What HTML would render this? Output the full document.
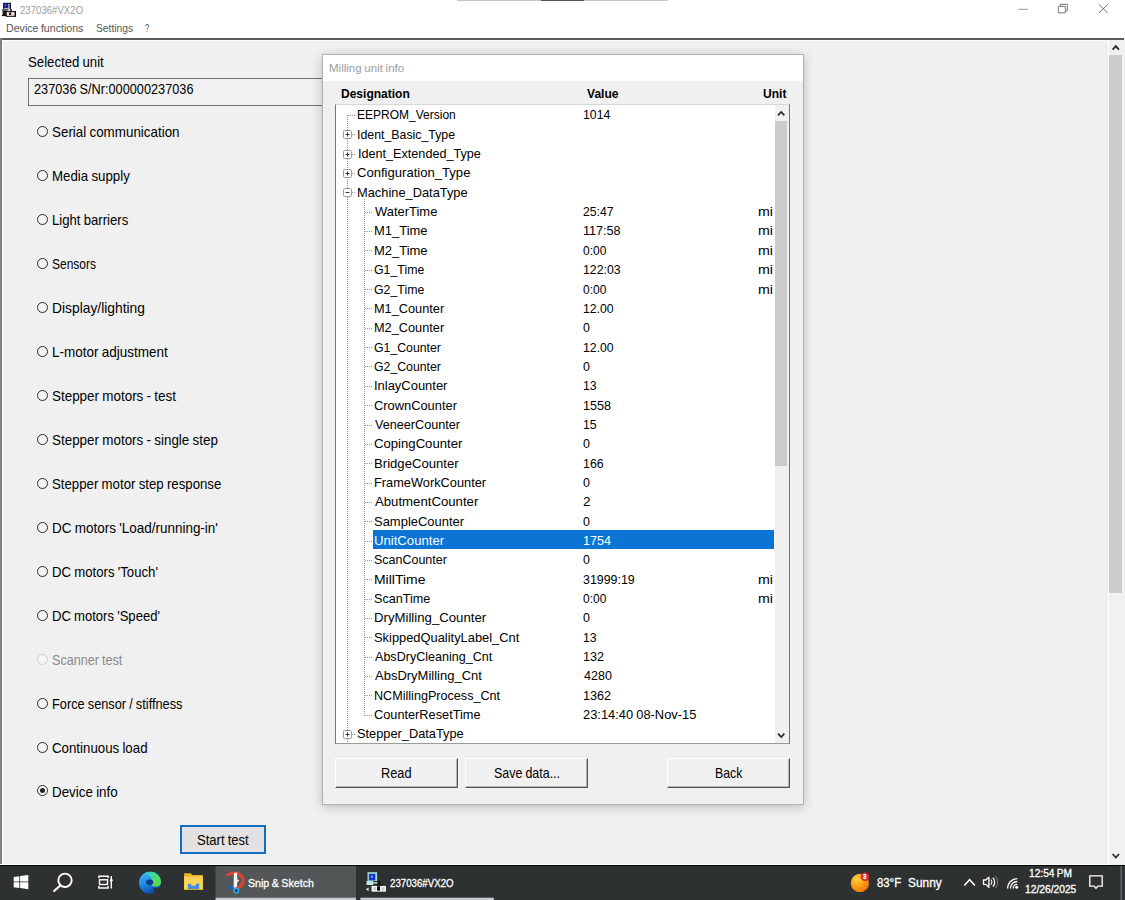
<!DOCTYPE html>
<html><head><meta charset="utf-8"><title>237036#VX2O</title>
<style>
html,body{margin:0;padding:0}
body{width:1125px;height:900px;overflow:hidden;position:relative;background:#fff;font-family:"Liberation Sans",sans-serif;color:#000}
.abs{position:absolute}
.t{position:absolute;white-space:nowrap;word-spacing:-0.5px;line-height:20px;height:20px;transform-origin:0 50%}
#client{left:0;top:38px;width:1125px;height:825.700px;background:#f0f0f0}
.rad{position:absolute;left:37.2px;width:9px;height:9px;border:1px solid #2a2a2a;border-radius:50%;background:#f4f4f4}
.rad.dis{border-color:#ccc}
.rad.on:after{content:"";position:absolute;left:2px;top:2px;width:5px;height:5px;border-radius:50%;background:#222}
#dlg{left:323px;top:54.500px;width:479.500px;height:749px;background:#f0f0f0;box-shadow:0 0 0 1px #b0b0b0,0 2px 10px 1px rgba(0,0,0,.22)}
#dlgt{left:0;top:0;width:479.500px;height:26px;background:#fff}
#tree{left:335px;top:104px;width:453.300px;height:638px;background:#fff;border:1px solid #767676;border-top-color:#d8d8d8;border-bottom-color:#9a9a9a;overflow:hidden}
.btn3{position:absolute;top:758px;height:28.300px;width:120.800px;background:#f0f0f0;border:1px solid #fff;border-right-color:#555;border-bottom-color:#555;box-shadow:inset -1px -1px 0 #b4b4b4}
#task{left:0;top:865px;width:1125px;height:35px;background:#2d3132}
</style></head><body>

<div class="abs" style="left:457px;top:0;width:211px;height:1px;background:#c8c8c8"></div>
<div class="abs" style="left:541px;top:0;width:43px;height:1px;background:#555"></div>
<svg class="abs" style="left:0;top:0" width="18" height="19" viewBox="0 0 18 19">
<rect x="3" y="2.800" width="7.800" height="6.200" fill="#15155e"/>
<rect x="3.800" y="3.600" width="4.600" height="4.200" fill="#1a1a86"/>
<rect x="4.600" y="4.600" width="1.600" height="1.200" fill="#8f8fe0"/>
<rect x="8.300" y="3.800" width="1.300" height="4.800" fill="#c9c9f2"/>
<rect x="3.800" y="7.900" width="5.600" height="0.900" fill="#d4d4f4"/>
<rect x="9.800" y="2.800" width="1" height="6.200" fill="#111"/>
<rect x="2" y="9.300" width="6.500" height="1.200" fill="#16162a"/>
<rect x="2.600" y="10.500" width="3.600" height="4.600" fill="#1a1a1a"/>
<rect x="1.900" y="14.800" width="5" height="1.300" fill="#0a0a0a"/>
<rect x="8.800" y="9.600" width="2.400" height="2" fill="#e9e27e"/>
<rect x="10.300" y="9" width="1.500" height="3" fill="#111"/>
<rect x="6.200" y="11.600" width="9.200" height="4.700" fill="#f3e4ea" stroke="#0a0a0a" stroke-width="1"/>
<rect x="9" y="12.600" width="2.200" height="2.300" fill="#0a0a0a"/>
<rect x="14.600" y="11" width="1.300" height="5.800" fill="#0a0a0a"/>
</svg>
<svg class="abs" style="left:1010px;top:0" width="115" height="20" viewBox="1010 0 115 20"><g stroke="#777" stroke-width="1" fill="none"><path d="M1018.300 9.300h9.500" stroke="#999"/><path d="M1058.300 6.300h7v6.500h-7z M1060.300 6.300v-2h7v6.500h-2"/><path d="M1098.800 4.300l9 8.800M1107.800 4.300l-9 8.800"/></g></svg>
<div id="client" class="abs">
<div class="abs" style="left:0;top:0;width:1123.600px;height:1.700px;background:#5c5c5c"></div><div class="abs" style="left:2px;top:1.700px;width:1121px;height:1px;background:#fbfbfb"></div>
<div class="abs" style="left:0;top:0;width:1.900px;height:825.500px;background:#818181"></div><div class="abs" style="left:1.900px;top:2px;width:1.200px;height:823.500px;background:#fcfcfc"></div>
<div class="abs" style="left:1108px;top:2px;width:17px;height:825px;background:#f1f1f1"></div>
<div class="abs" style="left:1108px;top:2px;width:1px;height:825px;background:#fff"></div>
<div class="abs" style="left:1109.300px;top:17px;width:12.400px;height:538.300px;background:#cdcdcd"></div>
<svg class="abs" style="left:1108px;top:2px" width="17" height="15" viewBox="1108 40 17 15"><path d="M1112.600 49.600l3.200-3.500l3.200 3.500" stroke="#262626" stroke-width="1.700" fill="none"/></svg>
<svg class="abs" style="left:1108px;top:810px" width="17" height="15" viewBox="1108 848 17 15"><path d="M1112.600 854l3.200 3.500l3.200-3.500" stroke="#262626" stroke-width="1.700" fill="none"/></svg>
<div class="abs" style="left:28.300px;top:39.500px;width:300px;height:26.700px;border:1px solid #707070;background:#f1f1f1"></div>
<div class="rad" style="top:88.1px"></div>
<div class="rad" style="top:132.1px"></div>
<div class="rad" style="top:176.1px"></div>
<div class="rad" style="top:220.1px"></div>
<div class="rad" style="top:264.1px"></div>
<div class="rad" style="top:308.1px"></div>
<div class="rad" style="top:352.1px"></div>
<div class="rad" style="top:396.1px"></div>
<div class="rad" style="top:440.1px"></div>
<div class="rad" style="top:484.1px"></div>
<div class="rad" style="top:528.1px"></div>
<div class="rad" style="top:572.1px"></div>
<div class="rad dis" style="top:616.1px"></div>
<div class="rad" style="top:660.1px"></div>
<div class="rad" style="top:704.1px"></div>
<div class="rad on" style="top:747.4px"></div>
<div class="abs" style="left:180px;top:787px;width:82px;height:25px;border:2px solid #0f6fc4;background:#e2e2e2"></div>
</div>
<div id="dlg" class="abs"><div id="dlgt" class="abs"></div></div>
<div id="tree" class="abs">
<div class="abs" style="left:37px;top:425.4px;width:401px;height:18.300px;background:#0a75d5"></div>
<svg class="abs" style="left:0;top:0" width="437" height="638" viewBox="0 0 437 638">
<g stroke="#969696" stroke-width="1" stroke-dasharray="1 1" fill="none">
<path d="M11.5 10V638"/>
<path d="M12 10.5H20"/>
<path d="M12 29.5H20"/>
<path d="M12 49.5H20"/>
<path d="M12 68.5H20"/>
<path d="M12 87.5H20"/>
<path d="M29 107.5H37"/>
<path d="M29 126.5H37"/>
<path d="M29 145.5H37"/>
<path d="M29 165.5H37"/>
<path d="M29 184.5H37"/>
<path d="M29 203.5H37"/>
<path d="M29 223.5H37"/>
<path d="M29 242.5H37"/>
<path d="M29 261.5H37"/>
<path d="M29 281.5H37"/>
<path d="M29 300.5H37"/>
<path d="M29 320.5H37"/>
<path d="M29 339.5H37"/>
<path d="M29 358.5H37"/>
<path d="M29 378.5H37"/>
<path d="M29 397.5H37"/>
<path d="M29 416.5H37"/>
<path d="M29 436.5H37"/>
<path d="M29 455.5H37"/>
<path d="M29 474.5H37"/>
<path d="M29 494.5H37"/>
<path d="M29 513.5H37"/>
<path d="M29 532.5H37"/>
<path d="M29 552.5H37"/>
<path d="M29 571.5H37"/>
<path d="M29 590.5H37"/>
<path d="M29 610.5H37"/>
<path d="M12 629.5H20"/>
<path d="M28.5 94V611"/>
</g>
<rect x="7.500" y="25.5" width="8" height="8" rx="1.200" fill="#fff" stroke="#9c9c9c"/>
<path d="M9.500 29.5h4" stroke="#3a3a3a"/>
<path d="M11.500 27.5v4" stroke="#3a3a3a"/>
<rect x="7.500" y="45.5" width="8" height="8" rx="1.200" fill="#fff" stroke="#9c9c9c"/>
<path d="M9.500 49.5h4" stroke="#3a3a3a"/>
<path d="M11.500 47.5v4" stroke="#3a3a3a"/>
<rect x="7.500" y="64.5" width="8" height="8" rx="1.200" fill="#fff" stroke="#9c9c9c"/>
<path d="M9.500 68.5h4" stroke="#3a3a3a"/>
<path d="M11.500 66.5v4" stroke="#3a3a3a"/>
<rect x="7.500" y="83.5" width="8" height="8" rx="1.200" fill="#fff" stroke="#9c9c9c"/>
<path d="M9.500 87.5h4" stroke="#3a3a3a"/>
<rect x="7.500" y="625.5" width="8" height="8" rx="1.200" fill="#fff" stroke="#9c9c9c"/>
<path d="M9.500 629.5h4" stroke="#3a3a3a"/>
<path d="M11.500 627.5v4" stroke="#3a3a3a"/>
</svg>
<div class="abs" style="left:439px;top:0;width:14.300px;height:639px;background:#f0f0f0"></div>
<div class="abs" style="left:439.300px;top:15.500px;width:12.200px;height:345.500px;background:#cbcbcb"></div>
<svg class="abs" style="left:439px;top:0" width="14" height="15" viewBox="0 0 14 15"><path d="M3 10.400l3.200-3.400l3.200 3.400" stroke="#262626" stroke-width="1.600" fill="none"/></svg>
<svg class="abs" style="left:439px;top:622px" width="14" height="15" viewBox="0 0 14 15"><path d="M3 6.600l3.200 3.400l3.200-3.400" stroke="#262626" stroke-width="1.600" fill="none"/></svg>
</div>
<div class="btn3" style="left:335px"></div>
<div class="btn3" style="left:465px"></div>
<div class="btn3" style="left:667px"></div>
<div id="task" class="abs"><div class="abs" style="left:0;top:0;width:1125px;height:1.200px;background:#050606"></div></div>
<svg class="abs" style="left:0;top:865px" width="1125" height="35" viewBox="0 865 1125 35">
<defs>
<linearGradient id="gedge" x1="0.2" y1="0.1" x2="0.6" y2="1"><stop offset="0" stop-color="#36b4f0"/><stop offset="0.5" stop-color="#1a84de"/><stop offset="1" stop-color="#1046a8"/></linearGradient><linearGradient id="gedgeG" x1="0.2" y1="0" x2="0.8" y2="1"><stop offset="0" stop-color="#2fd0d0"/><stop offset="0.6" stop-color="#4fdc66"/><stop offset="1" stop-color="#58d84c"/></linearGradient>
<radialGradient id="gsun" cx="0.35" cy="0.3" r="0.8"><stop offset="0" stop-color="#ffd23a"/><stop offset="0.55" stop-color="#fb9a16"/><stop offset="1" stop-color="#ee6b10"/></radialGradient>
</defs>
<!-- start -->
<g fill="#fff">
<polygon points="13.7,877 19.3,876.2 19.3,881.5 13.700,881.500"/>
<polygon points="20.1,876.1 28.3,874.9 28.3,881.5 20.100,881.5"/>
<polygon points="13.7,882.3 19.3,882.3 19.3,888 13.700,887.2"/>
<polygon points="20.1,882.3 28.3,882.3 28.3,889.3 20.100,888.1"/>
</g>
<!-- search -->
<circle cx="65" cy="880.3" r="6.7" fill="none" stroke="#fff" stroke-width="1.9"/>
<path d="M60.300 885.400L54.100 891.100" stroke="#fff" stroke-width="2.1" stroke-linecap="round"/>
<!-- task view -->
<g fill="none" stroke="#fff" stroke-width="1.4">
<rect x="99.500" y="879.800" width="8" height="4.700"/>
<path d="M98.900 878.300V876.300H108.100V878.300"/>
<path d="M98.900 886V888H108.100V886"/>
<path d="M111.300 876V888.600"/>
</g>
<circle cx="111.300" cy="880.300" r="1.400" fill="#fff"/>
<!-- edge -->
<circle cx="149.900" cy="882.700" r="10.900" fill="url(#gedge)"/>
<path d="M149 872c6.500-1 12 3.800 12 10c0 3.200-3 5.200-6.500 4.600c-2.200-0.400-3.200-1.600-2.600-3.200c0.900-2.600 0-5.600-2.600-7.600c-1.500-1.200-3.200-1.800-5-2.200c1.400-0.900 3-1.400 4.700-1.600z" fill="url(#gedgeG)"/>
<ellipse cx="149.700" cy="882.300" rx="3.600" ry="2.700" fill="#113c8e"/>
<path d="M153.300 887.300c2.800 1.100 6 0.600 7.900-1c-0.400 3-2.300 5.600-5.300 7.200c-2.200-1.100-3.300-3.600-2.600-6.200z" fill="#2c3032" opacity="0.900"/>
<!-- folder -->
<path d="M184.100 873.300h6.600l1.700 1.800h10.400v14.800h-18.700z" fill="#e9b429"/>
<rect x="184.100" y="876.600" width="18.700" height="13.300" fill="#fad457"/>
<path d="M188 889.900v-6.200h3.200v2h4.700v-2h3.200v6.200z" fill="#3c8fe3"/>
<rect x="184.100" y="888.900" width="18.700" height="1" fill="#e0a820"/>
<!-- snip highlight -->
<rect x="215.500" y="866.200" width="140.500" height="31.600" fill="#545758"/>
<rect x="215.500" y="897.700" width="140.500" height="2.300" fill="#c9ccce"/>
<rect x="360.400" y="897.700" width="133.400" height="2.300" fill="#c9ccce"/>
<!-- snip icon -->
<path d="M228 874.800c4-2.600 9.500-2.400 12.800 0.800c3.400 3.300 3.200 8.400-1.700 11.600" fill="none" stroke="#e2432a" stroke-width="3.200" stroke-linecap="round"/>
<path d="M233.900 873l3.100-0.500l0.300 6.800l1.900 1.200l-1.900 1.700l-0.400 5l-3.300 0.500z" fill="#f6f2f2"/>
<path d="M226.800 887.800c1.500-2 4-2.800 6.200-2.300l0.500 3.200c-2.200 1-4.800 0.700-6.700-0.900z" fill="#1d5fb8"/>
<circle cx="236.300" cy="890.600" r="2.300" fill="#123a78" stroke="#3aa9ea" stroke-width="1.500"/>
<!-- app icon -->
<rect x="367.500" y="872.200" width="9.600" height="8.800" fill="#a6dccb"/>
<rect x="368.900" y="873.800" width="6.400" height="6.600" fill="#1432cc"/>
<rect x="371" y="875.500" width="2" height="2.500" fill="#6f8cf0"/>
<rect x="366.500" y="881" width="6.600" height="4" fill="#bfe6dd"/>
<rect x="372.800" y="882.300" width="4.600" height="1.200" fill="#f0f0f0"/>
<rect x="378.600" y="881" width="1.300" height="5.300" fill="#050505"/>
<rect x="376.800" y="884.800" width="5" height="1.300" fill="#050505"/>
<rect x="371.500" y="885.900" width="14.500" height="5.800" fill="#ededed"/>
<rect x="377.100" y="886.300" width="2.900" height="4.300" fill="#050505"/>
<rect x="373.600" y="887.500" width="2.200" height="2.600" fill="#c8c8c8"/>
<rect x="382" y="887.500" width="2.200" height="2.600" fill="#c8c8c8"/>
<path d="M365.800 889.200l2.800-1.800v3.600z" fill="#e8e8e8"/>
<!-- weather -->
<circle cx="859.900" cy="882.900" r="9.200" fill="url(#gsun)"/>
<circle cx="865" cy="876.800" r="4.300" fill="#d4262c"/>
<!-- chevron -->
<path d="M964.300 885.400l5.300-5.700l5.300 5.700" fill="none" stroke="#fff" stroke-width="1.500"/>
<!-- speaker -->
<path d="M983.500 880h2.300l3.100-2.900v10.200l-3.100-2.900h-2.300z" fill="none" stroke="#fff" stroke-width="1.300" stroke-linejoin="round"/>
<path d="M990.800 879.700c1.300 1.300 1.300 3.700 0 5" fill="none" stroke="#fff" stroke-width="1.200"/>
<path d="M992.900 877.800c2.400 2.400 2.400 6.400 0 8.800" fill="none" stroke="#fff" stroke-width="1.300"/>
<path d="M995.300 876.200c3.200 3.400 3.200 8.600 0 12" fill="none" stroke="#7e8183" stroke-width="1"/>
<!-- wifi -->
<g fill="none" stroke="#fff" stroke-width="1.400">
<path d="M1013.300 888.400a4 4 0 0 1 4-4"/>
<path d="M1010.400 888.400a6.900 6.900 0 0 1 6.900-6.900"/>
<path d="M1007.500 888.400a9.800 9.800 0 0 1 9.800-9.800"/>
</g>
<circle cx="1016.700" cy="887.300" r="1.500" fill="#fff"/>
<!-- notification -->
<path d="M1089.800 875.800h12.400v10.400h-4.400l-1.800 2.200l-1.800-2.200h-4.400z" fill="none" stroke="#fff" stroke-width="1.300"/>
<rect x="1120.500" y="866" width="1.300" height="34" fill="#6a6d6f"/>
</svg>

<div class="t" style="left:20.20px;top:-0.10px;font-size:10.6px;transform:scaleX(0.9082);color:#9c9c9c">237036#VX2O</div>
<div class="t" style="left:5.90px;top:18.40px;font-size:10.8px;transform:scaleX(0.9836);color:#555">Device functions</div>
<div class="t" style="left:95.58px;top:18.40px;font-size:10.8px;transform:scaleX(0.9506);color:#555">Settings</div>
<div class="t" style="left:144.70px;top:18.40px;font-size:10.8px;transform:scaleX(0.6836);color:#555">?</div>
<div class="t" style="left:28.30px;top:52.40px;font-size:14.3px;transform:scaleX(0.9224)">Selected unit</div>
<div class="t" style="left:33.80px;top:79.20px;font-size:14.3px;transform:scaleX(0.8901)">237036 S/Nr:000000237036</div>
<div class="t" style="left:51.88px;top:122.20px;font-size:14.3px;transform:scaleX(0.9365)">Serial communication</div>
<div class="t" style="left:51.99px;top:166.20px;font-size:14.3px;transform:scaleX(0.9291)">Media supply</div>
<div class="t" style="left:51.99px;top:210.20px;font-size:14.3px;transform:scaleX(0.9189)">Light barriers</div>
<div class="t" style="left:52.20px;top:254.20px;font-size:14.3px;transform:scaleX(0.8387)">Sensors</div>
<div class="t" style="left:51.94px;top:298.20px;font-size:14.3px;transform:scaleX(0.9670)">Display/lighting</div>
<div class="t" style="left:51.96px;top:342.20px;font-size:14.3px;transform:scaleX(0.9440)">L-motor adjustment</div>
<div class="t" style="left:51.88px;top:386.20px;font-size:14.3px;transform:scaleX(0.9391)">Stepper motors - test</div>
<div class="t" style="left:51.88px;top:430.20px;font-size:14.3px;transform:scaleX(0.9386)">Stepper motors - single step</div>
<div class="t" style="left:51.70px;top:474.20px;font-size:14.3px;transform:scaleX(0.9261)">Stepper motor step response</div>
<div class="t" style="left:51.97px;top:518.20px;font-size:14.3px;transform:scaleX(0.9421)">DC motors 'Load/running-in'</div>
<div class="t" style="left:51.99px;top:562.20px;font-size:14.3px;transform:scaleX(0.9220)">DC motors 'Touch'</div>
<div class="t" style="left:52.00px;top:606.20px;font-size:14.3px;transform:scaleX(0.9140)">DC motors 'Speed'</div>
<div class="t" style="left:51.70px;top:650.20px;font-size:14.3px;transform:scaleX(0.8821);color:#8a8a8a">Scanner test</div>
<div class="t" style="left:52.02px;top:694.20px;font-size:14.3px;transform:scaleX(0.8937)">Force sensor / stiffness</div>
<div class="t" style="left:51.70px;top:738.20px;font-size:14.3px;transform:scaleX(0.9290)">Continuous load</div>
<div class="t" style="left:51.98px;top:781.50px;font-size:14.3px;transform:scaleX(0.9355)">Device info</div>
<div class="t" style="left:197.00px;top:829.80px;font-size:14.3px;transform:scaleX(0.9118)">Start test</div>
<div class="t" style="left:329.38px;top:57.60px;font-size:10.8px;transform:scaleX(1.0676);color:#9c9c9c">Milling unit info</div>
<div class="t" style="left:340.90px;top:84.20px;font-size:12.2px;transform:scaleX(0.9865);font-weight:bold">Designation</div>
<div class="t" style="left:586.70px;top:84.20px;font-size:12.2px;transform:scaleX(0.9894);font-weight:bold">Value</div>
<div class="t" style="left:763.30px;top:84.20px;font-size:12.2px;transform:scaleX(0.9871);font-weight:bold">Unit</div>
<div class="t" style="left:357.36px;top:105.40px;font-size:13.3px;transform:scaleX(0.9030)">EEPROM_Version</div>
<div class="t" style="left:583.37px;top:105.40px;font-size:13.3px;transform:scaleX(0.9243)">1014</div>
<div class="t" style="left:357.12px;top:124.74px;font-size:13.3px;transform:scaleX(0.9280)">Ident_Basic_Type</div>
<div class="t" style="left:357.61px;top:144.09px;font-size:13.3px;transform:scaleX(0.9494)">Ident_Extended_Type</div>
<div class="t" style="left:356.81px;top:163.43px;font-size:13.3px;transform:scaleX(0.9834)">Configuration_Type</div>
<div class="t" style="left:357.20px;top:182.78px;font-size:13.3px;transform:scaleX(0.9653)">Machine_DataType</div>
<div class="t" style="left:375.30px;top:202.12px;font-size:13.3px;transform:scaleX(0.9736)">WaterTime</div>
<div class="t" style="left:582.80px;top:202.12px;font-size:13.3px;transform:scaleX(0.9191)">25:47</div>
<div class="t" style="left:757.92px;top:202.12px;font-size:13.3px;transform:scaleX(1.0683)">mi</div>
<div class="t" style="left:374.33px;top:221.46px;font-size:13.3px;transform:scaleX(0.9753)">M1_Time</div>
<div class="t" style="left:583.36px;top:221.46px;font-size:13.3px;transform:scaleX(0.9482)">117:58</div>
<div class="t" style="left:757.92px;top:221.46px;font-size:13.3px;transform:scaleX(1.0683)">mi</div>
<div class="t" style="left:374.33px;top:240.81px;font-size:13.3px;transform:scaleX(0.9753)">M2_Time</div>
<div class="t" style="left:582.80px;top:240.81px;font-size:13.3px;transform:scaleX(0.9012)">0:00</div>
<div class="t" style="left:757.92px;top:240.81px;font-size:13.3px;transform:scaleX(1.0683)">mi</div>
<div class="t" style="left:374.10px;top:260.15px;font-size:13.3px;transform:scaleX(0.9278)">G1_Time</div>
<div class="t" style="left:583.38px;top:260.15px;font-size:13.3px;transform:scaleX(0.9243)">122:03</div>
<div class="t" style="left:757.92px;top:260.15px;font-size:13.3px;transform:scaleX(1.0683)">mi</div>
<div class="t" style="left:374.10px;top:279.50px;font-size:13.3px;transform:scaleX(0.9278)">G2_Time</div>
<div class="t" style="left:582.80px;top:279.50px;font-size:13.3px;transform:scaleX(0.9012)">0:00</div>
<div class="t" style="left:757.92px;top:279.50px;font-size:13.3px;transform:scaleX(1.0683)">mi</div>
<div class="t" style="left:374.35px;top:298.84px;font-size:13.3px;transform:scaleX(0.9583)">M1_Counter</div>
<div class="t" style="left:583.38px;top:298.84px;font-size:13.3px;transform:scaleX(0.9222)">12.00</div>
<div class="t" style="left:374.35px;top:318.18px;font-size:13.3px;transform:scaleX(0.9583)">M2_Counter</div>
<div class="t" style="left:582.80px;top:318.18px;font-size:13.3px;transform:scaleX(0.9351)">0</div>
<div class="t" style="left:374.10px;top:337.53px;font-size:13.3px;transform:scaleX(0.9235)">G1_Counter</div>
<div class="t" style="left:583.38px;top:337.53px;font-size:13.3px;transform:scaleX(0.9222)">12.00</div>
<div class="t" style="left:374.10px;top:356.87px;font-size:13.3px;transform:scaleX(0.9235)">G2_Counter</div>
<div class="t" style="left:582.80px;top:356.87px;font-size:13.3px;transform:scaleX(0.9351)">0</div>
<div class="t" style="left:373.84px;top:376.22px;font-size:13.3px;transform:scaleX(0.9734)">InlayCounter</div>
<div class="t" style="left:583.39px;top:376.22px;font-size:13.3px;transform:scaleX(0.9222)">13</div>
<div class="t" style="left:373.60px;top:395.56px;font-size:13.3px;transform:scaleX(0.9672)">CrownCounter</div>
<div class="t" style="left:583.36px;top:395.56px;font-size:13.3px;transform:scaleX(0.9492)">1558</div>
<div class="t" style="left:374.90px;top:414.90px;font-size:13.3px;transform:scaleX(0.9505)">VeneerCounter</div>
<div class="t" style="left:583.39px;top:414.90px;font-size:13.3px;transform:scaleX(0.9222)">15</div>
<div class="t" style="left:373.60px;top:434.25px;font-size:13.3px;transform:scaleX(0.9879)">CopingCounter</div>
<div class="t" style="left:582.80px;top:434.25px;font-size:13.3px;transform:scaleX(0.9351)">0</div>
<div class="t" style="left:374.32px;top:453.59px;font-size:13.3px;transform:scaleX(0.9876)">BridgeCounter</div>
<div class="t" style="left:583.37px;top:453.59px;font-size:13.3px;transform:scaleX(0.9333)">166</div>
<div class="t" style="left:374.34px;top:472.94px;font-size:13.3px;transform:scaleX(0.9624)">FrameWorkCounter</div>
<div class="t" style="left:582.80px;top:472.94px;font-size:13.3px;transform:scaleX(0.9351)">0</div>
<div class="t" style="left:375.20px;top:492.28px;font-size:13.3px;transform:scaleX(0.9911)">AbutmentCounter</div>
<div class="t" style="left:583.30px;top:492.28px;font-size:13.3px;transform:scaleX(1.0222)">2</div>
<div class="t" style="left:373.60px;top:511.62px;font-size:13.3px;transform:scaleX(0.9753)">SampleCounter</div>
<div class="t" style="left:582.80px;top:511.62px;font-size:13.3px;transform:scaleX(0.9351)">0</div>
<div class="t" style="left:374.32px;top:530.97px;font-size:13.3px;transform:scaleX(0.9884);color:#fff">UnitCounter</div>
<div class="t" style="left:583.35px;top:530.97px;font-size:13.3px;transform:scaleX(0.9438);color:#fff">1754</div>
<div class="t" style="left:374.10px;top:550.31px;font-size:13.3px;transform:scaleX(0.9391)">ScanCounter</div>
<div class="t" style="left:582.80px;top:550.31px;font-size:13.3px;transform:scaleX(0.9351)">0</div>
<div class="t" style="left:374.25px;top:569.66px;font-size:13.3px;transform:scaleX(1.0494)">MillTime</div>
<div class="t" style="left:582.80px;top:569.66px;font-size:13.3px;transform:scaleX(0.9327)">31999:19</div>
<div class="t" style="left:757.92px;top:569.66px;font-size:13.3px;transform:scaleX(1.0683)">mi</div>
<div class="t" style="left:374.10px;top:589.00px;font-size:13.3px;transform:scaleX(0.9481)">ScanTime</div>
<div class="t" style="left:582.80px;top:589.00px;font-size:13.3px;transform:scaleX(0.9012)">0:00</div>
<div class="t" style="left:757.92px;top:589.00px;font-size:13.3px;transform:scaleX(1.0683)">mi</div>
<div class="t" style="left:374.32px;top:608.34px;font-size:13.3px;transform:scaleX(0.9918)">DryMilling_Counter</div>
<div class="t" style="left:582.80px;top:608.34px;font-size:13.3px;transform:scaleX(0.9351)">0</div>
<div class="t" style="left:374.10px;top:627.69px;font-size:13.3px;transform:scaleX(0.9684)">SkippedQualityLabel_Cnt</div>
<div class="t" style="left:583.39px;top:627.69px;font-size:13.3px;transform:scaleX(0.9222)">13</div>
<div class="t" style="left:375.20px;top:647.03px;font-size:13.3px;transform:scaleX(0.9448)">AbsDryCleaning_Cnt</div>
<div class="t" style="left:583.37px;top:647.03px;font-size:13.3px;transform:scaleX(0.9454)">132</div>
<div class="t" style="left:375.20px;top:666.38px;font-size:13.3px;transform:scaleX(0.9771)">AbsDryMilling_Cnt</div>
<div class="t" style="left:583.90px;top:666.38px;font-size:13.3px;transform:scaleX(0.9425)">4280</div>
<div class="t" style="left:374.36px;top:685.72px;font-size:13.3px;transform:scaleX(0.9481)">NCMillingProcess_Cnt</div>
<div class="t" style="left:583.36px;top:685.72px;font-size:13.3px;transform:scaleX(0.9492)">1362</div>
<div class="t" style="left:373.60px;top:705.06px;font-size:13.3px;transform:scaleX(0.9590)">CounterResetTime</div>
<div class="t" style="left:582.80px;top:705.06px;font-size:13.3px;transform:scaleX(0.9686)">23:14:40 08-Nov-15</div>
<div class="t" style="left:357.00px;top:724.41px;font-size:13.3px;transform:scaleX(0.9622)">Stepper_DataType</div>
<div class="t" style="left:380.73px;top:762.60px;font-size:14.3px;transform:scaleX(0.8934)">Read</div>
<div class="t" style="left:494.30px;top:762.60px;font-size:14.3px;transform:scaleX(0.8712)">Save data...</div>
<div class="t" style="left:714.97px;top:762.60px;font-size:14.3px;transform:scaleX(0.8607)">Back</div>
<div class="t" style="left:247.80px;top:872.80px;font-size:11.6px;transform:scaleX(0.9174);color:#fff;-webkit-text-stroke:0.3px #fff">Snip &amp; Sketch</div>
<div class="t" style="left:389.60px;top:872.80px;font-size:11.6px;transform:scaleX(0.8358);color:#fff;-webkit-text-stroke:0.3px #fff">237036#VX2O</div>
<div class="t" style="left:863.00px;top:866.70px;font-size:6.5px;transform:scaleX(0.9231);color:#fff;-webkit-text-stroke:0.3px #fff;font-weight:bold">3</div>
<div class="t" style="left:876.90px;top:872.80px;font-size:12.2px;transform:scaleX(0.9304);color:#fff;-webkit-text-stroke:0.3px #fff">83°F</div>
<div class="t" style="left:908.00px;top:872.80px;font-size:12.2px;transform:scaleX(0.9760);color:#fff;-webkit-text-stroke:0.3px #fff">Sunny</div>
<div class="t" style="left:1028.90px;top:864.30px;font-size:10.2px;transform:scaleX(0.9974);color:#fff;-webkit-text-stroke:0.3px #fff">12:54 PM</div>
<div class="t" style="left:1024.70px;top:880.30px;font-size:10.2px;transform:scaleX(1.0062);color:#fff;-webkit-text-stroke:0.3px #fff">12/26/2025</div>
</body></html>
